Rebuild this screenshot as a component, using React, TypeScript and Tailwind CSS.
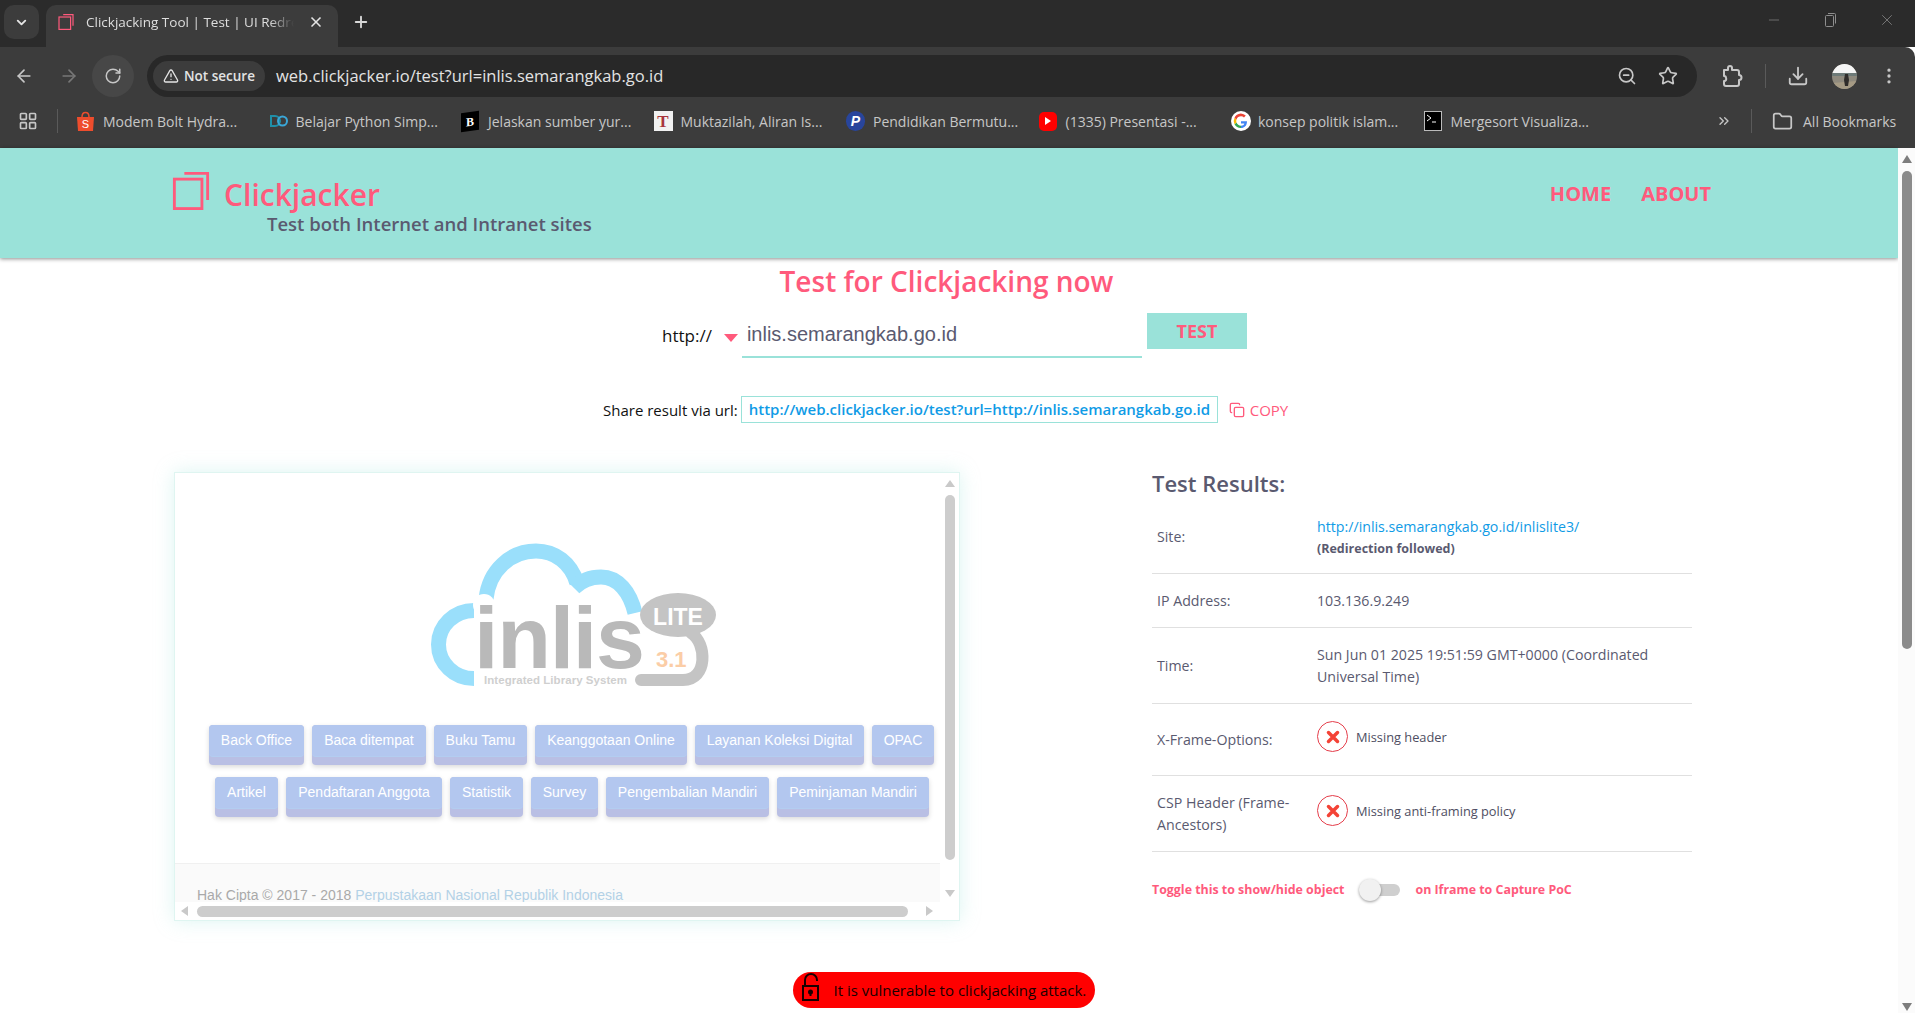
import {
  ArrowLeft,
  ArrowRight,
  ChevronDown,
  ChevronsRight,
  Copy,
  Download,
  EllipsisVertical,
  Folder,
  LayoutGrid,
  Minus,
  Plus,
  RotateCw,
  Star,
  TriangleAlert,
  X,
  ZoomOut,
} from "lucide-react";

// bookmark bar entries, each cell is the same width
const bookmarks = [
  { label: "Modem Bolt Hydra...", icon: "shopee" },
  { label: "Belajar Python Simp...", icon: "infinity" },
  { label: "Jelaskan sumber yur...", icon: "b" },
  { label: "Muktazilah, Aliran Is...", icon: "t" },
  { label: "Pendidikan Bermutu...", icon: "p" },
  { label: "(1335) Presentasi -...", icon: "yt" },
  { label: "konsep politik islam...", icon: "g" },
  { label: "Mergesort Visualiza...", icon: "term" },
];

const buttonsTop = [
  { label: "Back Office", w: "w-[95px]" },
  { label: "Baca ditempat", w: "w-[114px]" },
  { label: "Buku Tamu", w: "w-[93px]" },
  { label: "Keanggotaan Online", w: "w-[152px]" },
  { label: "Layanan Koleksi Digital", w: "w-[169px]" },
  { label: "OPAC", w: "w-[62px]" },
];

const buttonsBottom = [
  { label: "Artikel", w: "w-[63px]" },
  { label: "Pendaftaran Anggota", w: "w-[156px]" },
  { label: "Statistik", w: "w-[73px]" },
  { label: "Survey", w: "w-[67px]" },
  { label: "Pengembalian Mandiri", w: "w-[163px]" },
  { label: "Peminjaman Mandiri", w: "w-[152px]" },
];

function BookmarkIcon({ kind }: { kind: string }) {
  if (kind === "shopee") {
    return (
      <svg width="19" height="20" viewBox="0 0 19 20">
        <path d="M1 6h17l-1 14H2z" fill="#ee4d2d" />
        <path d="M6 6c0-6 7-6 7 0" fill="none" stroke="#ee4d2d" strokeWidth="1.5" />
        <text x="9.5" y="17" textAnchor="middle" fontSize="11" fill="#fff" fontFamily="Liberation Sans">S</text>
      </svg>
    );
  }
  if (kind === "infinity") {
    return (
      <svg width="20" height="14" viewBox="0 0 20 14" fill="none" strokeWidth="2">
        <path d="M2 2h4a5 5 0 0 1 0 10H2z" stroke="#1f8fa8" />
        <path d="M18 7a4.5 4.5 0 1 1-9 0 4.5 4.5 0 0 1 9 0z" stroke="#3aa7d8" />
      </svg>
    );
  }
  if (kind === "b") {
    return (
      <div className="flex h-[19px] w-[18px] skew-y-[-8deg] items-center justify-center bg-black font-['Liberation_Serif',serif] text-[12px] font-bold leading-none text-white">
        B
      </div>
    );
  }
  if (kind === "t") {
    return (
      <div className="flex h-[20px] w-[19px] items-center justify-center bg-[#f1f1f1] font-['Liberation_Serif',serif] text-[17px] font-bold leading-none text-[#a8343c]">
        T
      </div>
    );
  }
  if (kind === "p") {
    return (
      <div className="flex h-[20px] w-[19px] items-center justify-center rounded-full bg-[#28459c] font-['Liberation_Sans',sans-serif] text-[14px] font-bold italic leading-none text-white">
        P
      </div>
    );
  }
  if (kind === "yt") {
    return (
      <div className="flex h-[19px] w-[18px] items-center justify-center rounded-[5px] bg-[#f00]">
        <svg width="8" height="8" viewBox="0 0 8 8">
          <path d="M1 0l6 4-6 4z" fill="#fff" />
        </svg>
      </div>
    );
  }
  if (kind === "g") {
    return (
      <svg width="20" height="20" viewBox="0 0 20 20">
        <circle cx="10" cy="10" r="10" fill="#fff" />
        <path d="M16 10.2h-6v2.4h3.4c-.4 1.4-1.7 2.2-3.4 2.2V17c3.4 0 6-2.3 6-6.800z" fill="#4285f4" />
        <path d="M5.500 11.600l-2 1.700C4.600 15.500 7 17 10 17v-2.200c-2 0-3.800-1.200-4.500-3.200z" fill="#34a853" />
        <path d="M5.500 8.400l-2-1.700a7.500 7.500 0 0 0 0 6.600l2-1.700a4.500 4.500 0 0 1 0-3.200z" fill="#fbbc05" />
        <path d="M10 5.200c1.200 0 2.200.4 3 1.200l1.800-1.800A7 7 0 0 0 3.500 6.700l2 1.700C6.200 6.400 8 5.200 10 5.200z" fill="#ea4335" />
      </svg>
    );
  }
  return (
    <div className="h-[20px] w-[18px] border border-[#bbb] bg-black">
      <svg width="16" height="18" viewBox="0 0 16 18" fill="none" stroke="#fff" strokeWidth="1">
        <path d="M2 3l4 3-4 3M7 10h4" />
      </svg>
    </div>
  );
}

function ExtensionIcon() {
  return (
    <svg width="24" height="24" viewBox="0 0 24 24" fill="none" stroke="#c7c7c7" strokeWidth="2" strokeLinejoin="round">
      <path d="M4 6h4V4a2 2 0 0 1 4 0v2h5a2 2 0 0 1 2 2v3a2 2 0 0 1 0 5v4a2 2 0 0 1-2 2H6a2 2 0 0 1-2-2v-3a2 2 0 0 0 2-3 2 2 0 0 0-2-2z" />
    </svg>
  );
}

function Avatar() {
  return (
    <svg width="25" height="25" viewBox="0 0 25 25" className="ml-[23px] shrink-0 rounded-full">
      <rect width="25" height="25" fill="#8f8a7e" />
      <rect width="25" height="9" fill="#f5f5f5" />
      <path d="M0 9h25v3H0z" fill="#6d7a78" />
      <path d="M0 19l25-2v8H0z" fill="#a59a84" />
      <path d="M13 10h3l1 6-1 6h-3l-1-6z" fill="#2f2c2a" />
    </svg>
  );
}

function PageLogo({ size }: { size: number }) {
  return (
    <svg width={size} height={size} viewBox="0 0 38 40" fill="none" stroke="#ff5a7c" strokeWidth="3">
      <rect x="1.500" y="7.500" width="29" height="31" />
      <path d="M12 1.500h24.500v28" />
    </svg>
  );
}

function InlisLogo() {
  return (
    <svg width="340" height="180" viewBox="0 0 340 180" className="ml-[226px] block shrink-0">
      <g fill="none" stroke="#9adffb" strokeWidth="15">
        <path d="M73 90.500A35.500 34 0 0 0 73 158.500" />
        <path d="M85 79C88 50 110 31 135 31c19 0 35 12 41 32" />
        <path d="M173 68c8-8 18-11 27-11 17 0 29 15 34 36" />
      </g>
      <circle cx="83" cy="85" r="11" fill="#fff" />
      <text x="73" y="148" fontFamily="Liberation Sans" fontWeight="700" fontSize="88" fill="#b9b9b9" textLength="171">
        inlis
      </text>
      <ellipse cx="277" cy="95" rx="38" ry="22" fill="#c4c4c4" />
      <path d="M290 113c16 10 17 47-8 47h-42" fill="none" stroke="#c4c4c4" strokeWidth="12" strokeLinecap="round" />
      <text x="277" y="105" textAnchor="middle" fontFamily="Liberation Sans" fontWeight="700" fontSize="23" fill="#fff">
        LITE
      </text>
      <text x="255" y="147" fontFamily="Liberation Sans" fontWeight="700" fontSize="22" fill="#fbcda6">
        3.1
      </text>
      <text x="83" y="164" fontFamily="Liberation Sans" fontWeight="700" fontSize="11.500" fill="#cfcfcf" textLength="143">
        Integrated Library System
      </text>
    </svg>
  );
}

function InlisButton({ label, w }: { label: string; w: string }) {
  return (
    <div
      className={`${w} flex h-[40px] shrink-0 items-start justify-center rounded-[4px] bg-[#b9bfe4] font-['Liberation_Sans',sans-serif] text-[14px] text-white shadow-[0_2px_5px_rgba(0,0,0,0.15)]`}
    >
      <div className="flex h-[32px] w-full items-center justify-center rounded-[4px] border-b border-[#b3cdf0] bg-[#b3c7ef]">
        {label}
      </div>
    </div>
  );
}

function Arrow({ d }: { d: string }) {
  return (
    <svg width="12" height="12" viewBox="0 0 12 12" className="shrink-0">
      <path d={d} fill="#c9c9c9" />
    </svg>
  );
}

function ResultRow({ label, children, h }: { label: React.ReactNode; children: React.ReactNode; h: string }) {
  return (
    <div className={`${h} flex items-center border-b border-[#e0e0e0] pl-[5px]`}>
      <div className="w-[160px] shrink-0">{label}</div>
      <div className="min-w-0 flex-1">{children}</div>
    </div>
  );
}

function MissingBadge({ text }: { text: string }) {
  return (
    <div className="mt-[-6px] flex items-center gap-[8px]">
      <div className="flex h-[31px] w-[31px] items-center justify-center rounded-full border-[1.500px] border-[#e53e4b]">
        <svg width="14" height="14" viewBox="0 0 14 14" stroke="#f44336" strokeWidth="3.500" strokeLinecap="round">
          <path d="M2.500 2.500l9 9M11.500 2.500l-9 9" />
        </svg>
      </div>
      <span className="text-[12.800px] font-medium text-[#4e4e62]">{text}</span>
    </div>
  );
}

export default function App() {
  return (
    <div className="h-[1013px] w-full overflow-hidden bg-white font-['Open_Sans',sans-serif]">
      {/* browser chrome */}
      <div className="flex h-[47px] items-end bg-[#2b2b2b] pl-[4px]">
        <div className="mb-[8px] flex h-[34px] w-[35px] items-center justify-center rounded-[10px] bg-[#3c3c3c] text-[#e4e4e4]">
          <ChevronDown size={15} strokeWidth={3} />
        </div>
        <div className="ml-[7px] flex h-[42px] w-[292px] items-start rounded-t-[10px] bg-[#3c3c3c] pl-[12px] pr-[14px] pt-[9px]">
          <PageLogo size={16} />
          <div className="ml-[12px] w-[208px] overflow-hidden whitespace-nowrap text-[13.500px] leading-[17px] text-[#dedede] [mask-image:linear-gradient(90deg,#000_88%,transparent)]">
            Clickjacking Tool | Test | UI Redress
          </div>
          <X size={16} className="ml-auto text-[#e4e4e4]" strokeWidth={2.500} />
        </div>
        <div className="mb-[16px] ml-[14px] text-[#d8d8d8]">
          <Plus size={18} strokeWidth={2.500} />
        </div>
        <div className="mb-[18px] ml-auto flex items-center gap-[40px] pr-[19px] text-[#8e8e8e]">
          <Minus size={16} strokeWidth={1} />
          <svg width="16" height="16" viewBox="0 0 16 16" fill="none" stroke="#8e8e8e">
            <rect x="3.500" y="3.500" width="8" height="11" rx="1" />
            <path d="M6 1.500h6.500a1 1 0 0 1 1 1v9" />
          </svg>
          <X size={18} strokeWidth={1} />
        </div>
      </div>
      <div className="flex h-[51px] items-center rounded-tr-[10px] bg-[#3c3c3c] pt-[7px] text-[#c7c7c7]">
        <ArrowLeft size={20} className="ml-[14px]" strokeWidth={2} />
        <ArrowRight size={20} className="ml-[25px] text-[#777]" strokeWidth={2} />
        <div className="ml-[13px] flex h-[42px] w-[42px] items-center justify-center rounded-full bg-[#474747]">
          <RotateCw size={18} strokeWidth={2} />
        </div>
        <div className="ml-[13px] flex h-[42px] w-[1550px] shrink-0 items-center rounded-full bg-[#282828] pl-[6px] pr-[19px]">
          <div className="flex h-[30px] w-[112px] items-center justify-center gap-[5px] rounded-full bg-[#3c3c3c] text-[13.500px] font-semibold text-[#e3e3e3]">
            <TriangleAlert size={16} />
            Not secure
          </div>
          <div className="ml-[11px] text-[16.500px] leading-none text-[#e3e3e3]">
            web.clickjacker.io/test?url=inlis.semarangkab.go.id
          </div>
          <ZoomOut size={20} className="ml-auto" />
          <Star size={20} className="ml-[21px]" />
        </div>
        <div className="ml-[23px]">
          <ExtensionIcon />
        </div>
        <div className="ml-[21px] h-[24px] w-px bg-[#5a5a5a]" />
        <Download size={22} className="ml-[21px]" />
        <Avatar />
        <EllipsisVertical size={20} className="ml-[22px]" />
      </div>
      <div className="flex h-[50px] items-center bg-[#3c3c3c] pb-[4px] text-[14px] text-[#c7c7c7]">
        <LayoutGrid size={20} className="ml-[18px]" />
        <div className="ml-[19px] mr-[18px] h-[24px] w-px bg-[#5a5a5a]" />
        {bookmarks.map((b) => (
          <div key={b.label} className="flex w-[192.500px] shrink-0 items-center">
            <div className="flex w-[27px] shrink-0 items-center">
              <BookmarkIcon kind={b.icon} />
            </div>
            <span className="whitespace-nowrap text-[14px]">{b.label}</span>
          </div>
        ))}
        <ChevronsRight size={16} className="ml-[100px]" />
        <div className="ml-[19px] h-[24px] w-px bg-[#5a5a5a]" />
        <Folder size={21} className="ml-[20px]" />
        <span className="ml-[10px] whitespace-nowrap text-[14px]">All Bookmarks</span>
      </div>

      <div className="flex h-[865px]">
        {/* page */}
        <div className="min-w-0 flex-1">
          <header className="flex h-[110px] items-start bg-[#9ae2d9] pl-[172px] pr-[187px] shadow-[0_1px_4px_rgba(0,0,0,0.45)]">
            <div className="mt-[24px]">
              <PageLogo size={38} />
            </div>
            <div className="ml-[14px] mt-[26px]">
              <div className="text-[30px] font-semibold leading-[42px] text-[#ff5a7c]">Clickjacker</div>
              <div className="ml-[43px] mt-[-5px] text-[18.500px] font-semibold leading-[26px] text-[#5a5a70]">
                Test both Internet and Intranet sites
              </div>
            </div>
            <nav className="ml-auto mt-[31px] flex gap-[30px] text-[20px] font-bold text-[#ff5a7c]">
              <span>HOME</span>
              <span>ABOUT</span>
            </nav>
          </header>

          <h1 className="mt-[3px] pr-[5px] text-center text-[28px] font-semibold leading-[40px] text-[#ff5a7c]">
            Test for Clickjacking now
          </h1>

          <div className="mt-[12px] flex items-start pl-[662px]">
            <span className="mt-[9px] text-[17px] leading-[28px] text-[#111]">http://</span>
            <svg width="14" height="8" viewBox="0 0 14 8" className="ml-[12px] mt-[21px]">
              <path d="M0 0h14L7 8z" fill="#ff5a7c" />
            </svg>
            <div className="ml-[4px] flex h-[45px] w-[400px] items-start border-b-2 border-[#9ae2d9] pl-[5px] pt-[7px] font-['Liberation_Sans',sans-serif] text-[20px] leading-[28px] text-[#5a5a70]">
              inlis.semarangkab.go.id
            </div>
            <div className="ml-[5px] flex h-[36px] w-[100px] items-center justify-center bg-[#9ae2d9] pt-[1px] text-[18px] font-bold text-[#ff5a7c]">
              TEST
            </div>
          </div>

          <div className="mt-[38px] flex h-[27px] items-center pl-[603px] pt-[1px] text-[15px]">
            <span className="text-[#111]">Share result via url:</span>
            <div className="ml-[3px] mt-[-1px] flex h-[27px] w-[477px] shrink-0 items-center whitespace-nowrap border border-[#9ae2d9] pl-[7px] font-semibold text-[#0f9be6]">
              http://web.clickjacker.io/test?url=http://inlis.semarangkab.go.id
            </div>
            <Copy size={16} className="ml-[11px] text-[#ff5a7c]" />
            <span className="ml-[5px] font-medium text-[#ff5a7c]">COPY</span>
          </div>

          <div className="mt-[49px] flex items-start pl-[174px]">
            {/* embedded site */}
            <div className="flex h-[449px] w-[786px] shrink-0 flex-col border border-[#dff5f1] shadow-[0_0_18px_rgba(154,226,217,0.35)]">
              <div className="flex min-h-0 flex-1">
                <div className="flex w-[765px] flex-col overflow-hidden pt-[47px]">
                  <InlisLogo />
                  <div className="mt-[25px] flex shrink-0 gap-[8px] pl-[34px]">
                    {buttonsTop.map((b) => (
                      <InlisButton key={b.label} {...b} />
                    ))}
                  </div>
                  <div className="mt-[12px] flex shrink-0 gap-[8px] pl-[40px]">
                    {buttonsBottom.map((b) => (
                      <InlisButton key={b.label} {...b} />
                    ))}
                  </div>
                  <div className="mt-[46px] flex-1 border-t border-[#f0f0f0] bg-[#fafafa] pl-[22px] pt-[21px] font-['Liberation_Sans',sans-serif] text-[14px] text-[#a9a9a9]">
                    Hak Cipta © 2017 - 2018 <span className="text-[#b3d1e6]">Perpustakaan Nasional Republik Indonesia</span>
                  </div>
                </div>
                <div className="flex flex-1 flex-col items-center pt-[5px]">
                  <Arrow d="M6 2l5 7H1z" />
                  <div className="mt-[5px] h-[365px] w-[10px] shrink-0 rounded-full bg-[#cdcdcd]" />
                  <div className="mb-[3px] mt-auto">
                    <Arrow d="M6 10L1 3h10z" />
                  </div>
                </div>
              </div>
              <div className="flex h-[18px] shrink-0 items-center pl-[4px] pr-[24px]">
                <Arrow d="M2 6l7-5v10z" />
                <div className="ml-[6px] mr-[15px] h-[11px] flex-1 rounded-full bg-[#cdcdcd]" />
                <Arrow d="M10 6L3 1v10z" />
              </div>
            </div>

            {/* results */}
            <div className="ml-[192px] w-[540px] text-[14.200px] leading-[22px] text-[#5a5a70]">
              <h2 className="mt-[-6px] text-[22px] font-semibold leading-[34px]">Test Results:</h2>
              <div className="mt-[1px]">
                <ResultRow label="Site:" h="h-[73px]">
                  <div className="mt-[2px] text-[#0f9be6]">http://inlis.semarangkab.go.id/inlislite3/</div>
                  <div className="text-[12.500px] font-bold">(Redirection followed)</div>
                </ResultRow>
                <ResultRow label="IP Address:" h="h-[54px]">
                  103.136.9.249
                </ResultRow>
                <ResultRow label="Time:" h="h-[76px]">
                  Sun Jun 01 2025 19:51:59 GMT+0000 (Coordinated Universal Time)
                </ResultRow>
                <ResultRow label="X-Frame-Options:" h="h-[72px]">
                  <MissingBadge text="Missing header" />
                </ResultRow>
                <ResultRow
                  label={
                    <>
                      CSP Header (Frame-
                      <br />
                      Ancestors)
                    </>
                  }
                  h="h-[76px]"
                >
                  <MissingBadge text="Missing anti-framing policy" />
                </ResultRow>
              </div>
              <div className="mt-[27px] flex items-center text-[12.400px] font-bold text-[#ff5a7c]">
                <span>Toggle this to show/hide object</span>
                <div className="ml-[15px] flex h-[12px] w-[41px] items-center rounded-full bg-[#cfcfcf]">
                  <div className="h-[22px] w-[22px] rounded-full bg-[#f1f1f1] shadow-[0_1px_3px_rgba(0,0,0,0.4)]" />
                </div>
                <span className="ml-[15px]">on Iframe to Capture PoC</span>
              </div>
            </div>
          </div>

          <div className="mt-[51px] flex justify-center pr-[11px]">
            <div className="flex h-[36px] w-[302px] items-center rounded-[18px] bg-[#f00] pl-[8px] text-[15px] font-medium text-[#1a0000]">
              <svg width="20" height="28" viewBox="0 0 20 28" fill="none" stroke="#1a0000" strokeWidth="2" className="mt-[-6px]">
                <path d="M4 13V7a6 6 0 0 1 12 0v1" />
                <rect x="2" y="13" width="15" height="14" />
                <circle cx="9.500" cy="19" r="1.500" fill="#1a0000" />
                <path d="M9.500 20v3" />
              </svg>
              <span className="ml-[13px] whitespace-nowrap">It is vulnerable to clickjacking attack.</span>
            </div>
          </div>
        </div>

        {/* page scrollbar */}
        <div className="flex w-[17px] shrink-0 flex-col items-center bg-[#fbfbfb] pt-[6px]">
          <svg width="12" height="10" viewBox="0 0 12 10">
            <path d="M6 1l5 8H1z" fill="#7d7d7d" />
          </svg>
          <div className="mt-[7px] h-[478px] w-[10px] shrink-0 rounded-full bg-[#8b8b8b]" />
          <svg width="12" height="10" viewBox="0 0 12 10" className="mb-[1px] mt-auto">
            <path d="M6 9L1 1h10z" fill="#7d7d7d" />
          </svg>
        </div>
      </div>
    </div>
  );
}
